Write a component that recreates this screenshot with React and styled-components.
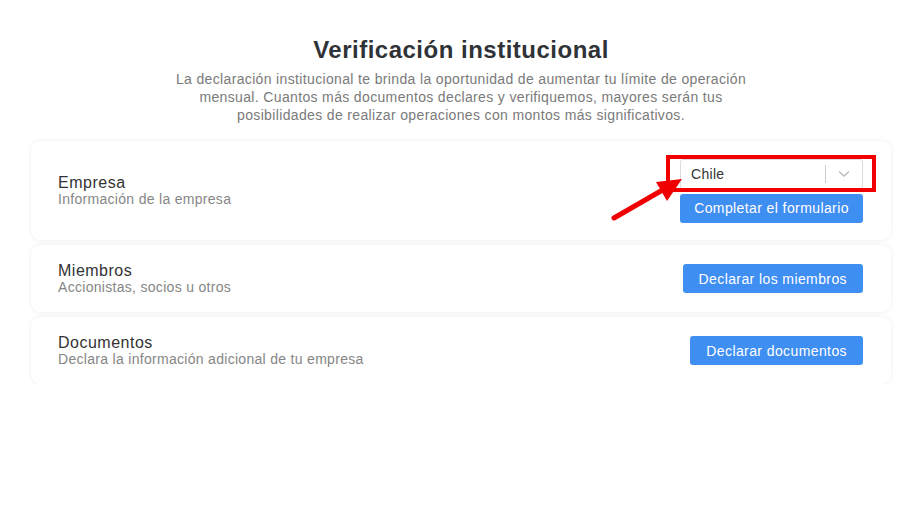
import React from 'react'
import styled, { createGlobalStyle } from 'styled-components'

const Global = createGlobalStyle`
    body {
        margin: 0;
        background: #fff;
        font-family: "Liberation Sans", Arial, sans-serif;
    }
`

const secciones = [
    { titulo: 'Empresa', sub: 'Información de la empresa', boton: 'Completar el formulario', select: true },
    { titulo: 'Miembros', sub: 'Accionistas, socios u otros', boton: 'Declarar los miembros' },
    { titulo: 'Documentos', sub: 'Declara la información adicional de tu empresa', boton: 'Declarar documentos' },
]

const App = () => {
    return (
        <Pagina>
            <Global />
            <Titulo>Verificación institucional</Titulo>
            <Descripcion>
                La declaración institucional te brinda la oportunidad de aumentar tu límite de operación<br />
                mensual. Cuantos más documentos declares y verifiquemos, mayores serán tus<br />
                posibilidades de realizar operaciones con montos más significativos.
            </Descripcion>
            <Lista>
                {secciones.map((s, index) => (
                    <Tarjeta key={index} $alto={s.select ? 99 : 67}>
                        <div>
                            <Nombre>{s.titulo}</Nombre>
                            <Sub>{s.sub}</Sub>
                        </div>
                        <Acciones>
                            {s.select && (
                                <Resaltado>
                                    <Select>
                                        <span>Chile</span>
                                        <Flecha>
                                            <Separador />
                                            <svg width="12" height="8" viewBox="0 0 12 8">
                                                <path d="M1 1.5 L6 6 L11 1.5" fill="none" stroke="#bbb" strokeWidth="1.4" />
                                            </svg>
                                        </Flecha>
                                    </Select>
                                    <Marco />
                                    <Puntero width="80" height="50" viewBox="0 0 80 50">
                                        <path d="M4 45 L56 15" stroke="#f00000" strokeWidth="5" strokeLinecap="round" />
                                        <path d="M72 6 L46 9 L57 28 Z" fill="#f00000" />
                                    </Puntero>
                                </Resaltado>
                            )}
                            <Boton $ancho={s.select ? 183 : null}>{s.boton}</Boton>
                        </Acciones>
                    </Tarjeta>
                ))}
            </Lista>
        </Pagina>
    )
}

const Pagina = styled.div`
    padding: 36px 30px 0 31px;
    display: flex;
    flex-direction: column;
    align-items: center;
`
const Titulo = styled.h1`
    margin: 0;
    font-size: 24px;
    letter-spacing: 0.5px;
    font-weight: 700;
    color: #2f3337;
    line-height: 28px;
`
const Descripcion = styled.p`
    margin: 6px 0 0;
    white-space: nowrap;
    text-align: center;
    font-size: 14px;
    letter-spacing: 0.35px;
    line-height: 18px;
    color: #7a7a7a;
`
const Lista = styled.div`
    margin-top: 17px;
    width: 100%;
    display: flex;
    flex-direction: column;
    gap: 5px;
`
const Tarjeta = styled.div`
    height: ${p => p.$alto}px;
    box-sizing: border-box;
    padding: 0 28px 0 27px;
    display: flex;
    justify-content: space-between;
    align-items: center;
    border-radius: 9px;
    background: #fff;
    box-shadow: 0 0 4px rgba(0, 0, 0, 0.08);
`
const Nombre = styled.div`
    font-size: 16px;
    letter-spacing: 0.5px;
    color: #333;
    line-height: 18px;
`
const Sub = styled.div`
    font-size: 14px;
    letter-spacing: 0.3px;
    color: #868686;
    line-height: 15px;
`
const Acciones = styled.div`
    display: flex;
    flex-direction: column;
    align-items: flex-end;
    gap: 5px;
`
const Resaltado = styled.div`
    position: relative;
`
const Select = styled.div`
    width: 183px;
    height: 30px;
    box-sizing: border-box;
    border: 1px solid #ddd;
    border-radius: 3px;
    display: flex;
    align-items: center;
    justify-content: space-between;
    padding-left: 10px;
    font-size: 14px;
    letter-spacing: 0.3px;
    color: #333;
    background: #fff;
`
const Flecha = styled.div`
    display: flex;
    align-items: center;
    height: 100%;
    padding-right: 12px;
    gap: 12px;
`
const Separador = styled.div`
    width: 1px;
    height: 18px;
    background: #ccc;
`
const Marco = styled.div`
    position: absolute;
    left: -14px;
    top: -4px;
    width: 210px;
    height: 37px;
    box-sizing: border-box;
    border: 4px solid #f00000;
`
const Puntero = styled.svg`
    position: absolute;
    left: -70px;
    top: 14px;
`
const Boton = styled.button`
    ${p => p.$ancho ? `width: ${p.$ancho}px;` : 'padding: 0 16px;'}
    height: 29px;
    border: none;
    border-radius: 3px;
    background: #3f8ef2;
    color: #fff;
    font-family: "Liberation Sans", Arial, sans-serif;
    font-size: 14px;
    letter-spacing: 0.4px;
`

export default App
